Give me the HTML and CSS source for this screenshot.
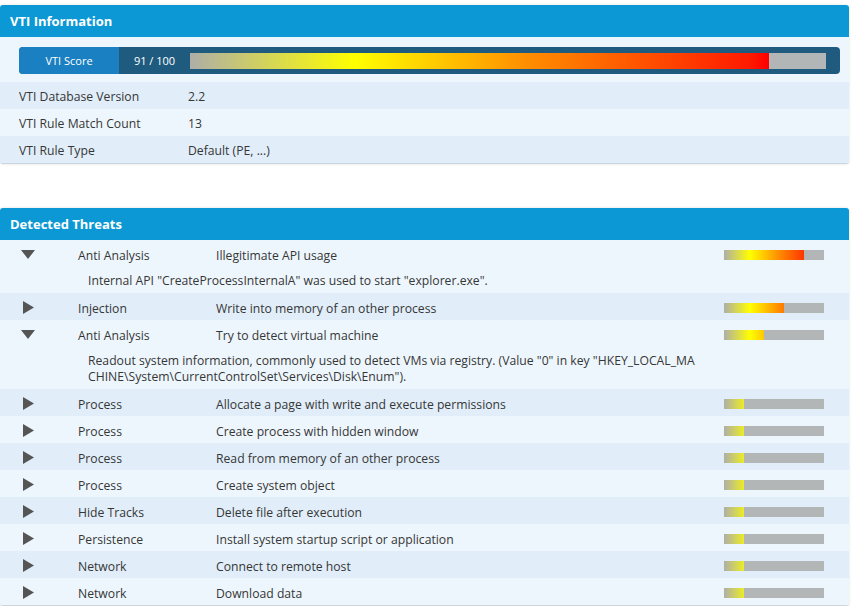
FILE: index.html
```html
<!DOCTYPE html>
<html>
<head>
<meta charset="utf-8">
<link rel="stylesheet" href="styles.css">
</head>
<body>
<div class="page">
  <section class="card">
    <div class="card-head">VTI Information</div>
    <div class="score-row">
      <div class="score">
        <div class="score-label">VTI Score</div>
        <div class="score-value">91 / 100</div>
        <div class="score-track"><div class="score-fill" style="width:91%"></div></div>
      </div>
    </div>
    <div class="info-row dark"><span class="info-key">VTI Database Version</span><span>2.2</span></div>
    <div class="info-row light"><span class="info-key">VTI Rule Match Count</span><span>13</span></div>
    <div class="info-row dark"><span class="info-key">VTI Rule Type</span><span>Default (PE, ...)</span></div>
  </section>

  <section class="card threats">
    <div class="card-head">Detected Threats</div>

    <div class="group light">
      <div class="t-row">
        <span class="tog"><svg width="14" height="9" viewBox="0 0 14 9"><polygon points="0,0 14,0 7,9" fill="#555"/></svg></span>
        <span class="txt">Anti Analysis</span><span class="txt">Illegitimate API usage</span>
        <span class="bar"><span class="bar-fill" style="width:80%"></span></span>
      </div>
      <div class="detail">Internal API "CreateProcessInternalA" was used to start "explorer.exe".</div>
    </div>

    <div class="group dark">
      <div class="t-row">
        <span class="tog"><svg width="11" height="13" viewBox="0 0 11 13"><polygon points="0,0 11,6.5 0,13" fill="#555"/></svg></span>
        <span class="txt">Injection</span><span class="txt">Write into memory of an other process</span>
        <span class="bar"><span class="bar-fill" style="width:60%"></span></span>
      </div>
    </div>

    <div class="group light">
      <div class="t-row">
        <span class="tog"><svg width="14" height="9" viewBox="0 0 14 9"><polygon points="0,0 14,0 7,9" fill="#555"/></svg></span>
        <span class="txt">Anti Analysis</span><span class="txt">Try to detect virtual machine</span>
        <span class="bar"><span class="bar-fill" style="width:40%"></span></span>
      </div>
      <div class="detail">Readout system information, commonly used to detect VMs via registry. (Value "0" in key "HKEY_LOCAL_MA<wbr>CHINE\System\CurrentControlSet\Services\Disk\Enum").</div>
    </div>

    <div class="group dark">
      <div class="t-row">
        <span class="tog"><svg width="11" height="13" viewBox="0 0 11 13"><polygon points="0,0 11,6.5 0,13" fill="#555"/></svg></span>
        <span class="txt">Process</span><span class="txt">Allocate a page with write and execute permissions</span>
        <span class="bar"><span class="bar-fill" style="width:20%"></span></span>
      </div>
    </div>
    <div class="group light">
      <div class="t-row">
        <span class="tog"><svg width="11" height="13" viewBox="0 0 11 13"><polygon points="0,0 11,6.5 0,13" fill="#555"/></svg></span>
        <span class="txt">Process</span><span class="txt">Create process with hidden window</span>
        <span class="bar"><span class="bar-fill" style="width:20%"></span></span>
      </div>
    </div>
    <div class="group dark">
      <div class="t-row">
        <span class="tog"><svg width="11" height="13" viewBox="0 0 11 13"><polygon points="0,0 11,6.5 0,13" fill="#555"/></svg></span>
        <span class="txt">Process</span><span class="txt">Read from memory of an other process</span>
        <span class="bar"><span class="bar-fill" style="width:20%"></span></span>
      </div>
    </div>
    <div class="group light">
      <div class="t-row">
        <span class="tog"><svg width="11" height="13" viewBox="0 0 11 13"><polygon points="0,0 11,6.5 0,13" fill="#555"/></svg></span>
        <span class="txt">Process</span><span class="txt">Create system object</span>
        <span class="bar"><span class="bar-fill" style="width:20%"></span></span>
      </div>
    </div>
    <div class="group dark">
      <div class="t-row">
        <span class="tog"><svg width="11" height="13" viewBox="0 0 11 13"><polygon points="0,0 11,6.5 0,13" fill="#555"/></svg></span>
        <span class="txt">Hide Tracks</span><span class="txt">Delete file after execution</span>
        <span class="bar"><span class="bar-fill" style="width:20%"></span></span>
      </div>
    </div>
    <div class="group light">
      <div class="t-row">
        <span class="tog"><svg width="11" height="13" viewBox="0 0 11 13"><polygon points="0,0 11,6.5 0,13" fill="#555"/></svg></span>
        <span class="txt">Persistence</span><span class="txt">Install system startup script or application</span>
        <span class="bar"><span class="bar-fill" style="width:20%"></span></span>
      </div>
    </div>
    <div class="group dark">
      <div class="t-row">
        <span class="tog"><svg width="11" height="13" viewBox="0 0 11 13"><polygon points="0,0 11,6.5 0,13" fill="#555"/></svg></span>
        <span class="txt">Network</span><span class="txt">Connect to remote host</span>
        <span class="bar"><span class="bar-fill" style="width:20%"></span></span>
      </div>
    </div>
    <div class="group light">
      <div class="t-row">
        <span class="tog"><svg width="11" height="13" viewBox="0 0 11 13"><polygon points="0,0 11,6.5 0,13" fill="#555"/></svg></span>
        <span class="txt">Network</span><span class="txt">Download data</span>
        <span class="bar"><span class="bar-fill" style="width:20%"></span></span>
      </div>
    </div>
  </section>
</div>
</body>
</html>
```
FILE: styles.css
```css
html, body {
  margin: 0;
  padding: 0;
  background: #ffffff;
}
body {
  font-family: "Open Sans", "Noto Sans", sans-serif;
  font-size: 12.2px;
  color: #363636;
}
.page {
  padding: 5px 10px 0 0;
}
.card {
  background: #eef6fd;
  border-radius: 3px;
  border-bottom: 1px solid #c9d5df;
  box-shadow: 0 0 3px rgba(0, 0, 0, 0.12);
  overflow: hidden;
}
.threats {
  margin-top: 44px;
}
.card-head {
  height: 32px;
  line-height: 32px;
  background: #0b98d5;
  color: #fff;
  font-weight: bold;
  font-size: 13px;
  padding-left: 10px;
}
.score-row {
  padding: 10px 9px 8px 19px;
}
.score {
  display: flex;
  height: 27px;
  background: #1f5b7e;
  border-radius: 4px;
  overflow: hidden;
  color: #fff;
  font-size: 11px;
  line-height: 28px;
}
.score-label {
  width: 100px;
  background: #1a80c2;
  text-align: center;
}
.score-value {
  width: 71px;
  text-align: center;
}
.score-track {
  flex: 1;
  margin: 6px 14px 5px 0;
  background: #b3b6b6;
}
.score-fill {
  height: 100%;
  background: linear-gradient(to right, #aeaea8 0px, #ffff00 165px, #ff8c00 340px, #ff1a00 560px, #ff0000 578px);
  background-size: 636px 100%;
}
.info-row {
  display: flex;
  align-items: center;
  height: 27px;
  padding: 0 19px;
  line-height: 18px;
}
.info-row span {
  padding-top: 3px;
}
.info-key {
  width: 169px;
}
.dark { background: #e1eef9; }
.light { background: #eef6fd; }
.t-row {
  display: grid;
  grid-template-columns: 78px 138px 1fr 100px;
  align-items: center;
  height: 27px;
  padding-right: 25px;
  line-height: 18px;
}
.txt {
  padding-top: 4px;
}
.tog {
  display: flex;
  justify-content: center;
  align-items: center;
  width: 56px;
  height: 18px;
  margin-top: 2px;
}
.bar {
  display: block;
  height: 10px;
  margin-top: 2px;
  background: #b3b6b6;
}
.bar-fill {
  display: block;
  height: 100%;
  background: linear-gradient(to right, #aeaea8 0px, #ffff00 26px, #ff8c00 55px, #ff1a00 88px, #ff0000 91px);
  background-size: 100px 100%;
}
.detail {
  padding: 6px 134px 4px 88px;
  line-height: 16px;
}
```
